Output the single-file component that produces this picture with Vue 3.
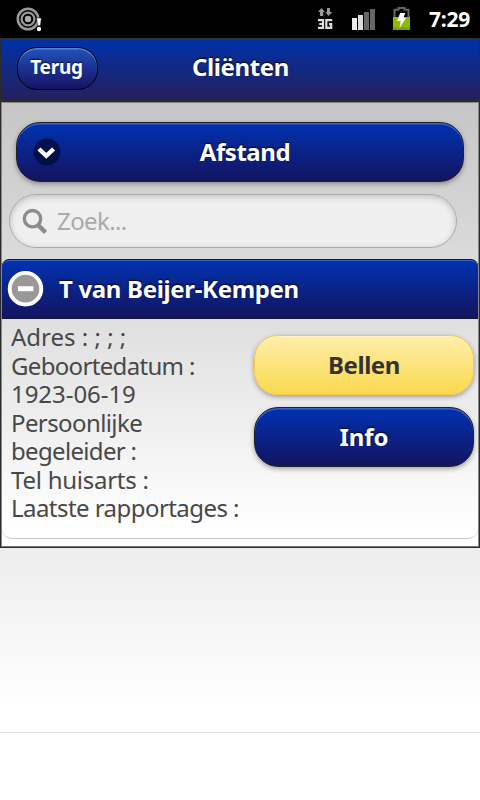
<script setup>
const details = [
  ['Adres : ; ; ;', 'adres'],
  ['Geboortedatum :', 'geboorte'],
  ['1923-06-19', 'datum'],
  ['Persoonlijke', 'persoonlijke'],
  ['begeleider :', 'begeleider'],
  ['Tel huisarts :', 'tel'],
  ['Laatste rapportages :', 'laatste'],
]
</script>

<template>
  <div class="screen">
    <div class="status">
      <svg class="debug" width="28" height="28" viewBox="0 0 28 28">
        <circle cx="12" cy="13" r="10.2" fill="none" stroke="#999" stroke-width="2.6" />
        <circle cx="12" cy="13" r="6.4" fill="none" stroke="#999" stroke-width="2.3" />
        <circle cx="12" cy="13" r="3.2" fill="#aaa" />
        <path d="M20.6 12h4.8l-1 7.7h-2.8z" fill="#fff" stroke="#000" stroke-width=".5" />
        <circle cx="23" cy="23" r="2.2" fill="#fff" />
      </svg>
      <svg class="net" width="18" height="24" viewBox="0 0 18 24">
        <path d="M4.5 1 8 5H6.2v4H3V5H1zM10 1h3v4h2.4L11.5 9 8.3 5H10z" fill="#999" />
        <path d="M1 13.2h5v7.6H1M2.2 17H6M15.2 13.2H9.3v7.6h4.9v-3.7h-2.2" fill="none" stroke="#ddd" stroke-width="2.2" />
      </svg>
      <svg class="signal" width="24" height="22" viewBox="0 0 24 22">
        <rect x="0" y="9" width="5" height="12" fill="#eee" />
        <rect x="6" y="6" width="5" height="15" fill="#ddd" />
        <rect x="12" y="3" width="5" height="18" fill="#666" />
        <rect x="18" y="0" width="5" height="21" fill="#666" />
      </svg>
      <svg class="battery" width="18" height="24" viewBox="0 0 18 24">
        <path d="M1.5 10V2.7h4V1h6v1.7h4V10" fill="none" stroke="#666" stroke-width="2" />
        <path d="M0 10h17v13H0z" fill="#8dbb00" />
        <path d="M0 20h17v3H0z" fill="#78a600" />
        <path d="M7.2 6h5l-1.7 5H13L6.5 21l1.2-7H4z" fill="#fff" />
      </svg>
      <span class="clock">7:29</span>
    </div>

    <div class="page">
      <header class="header">
        <button class="back"><span>Terug</span></button>
        <h1><span>Cliënten</span></h1>
      </header>
      <main class="content">
        <button class="btn blue sort">
          <svg width="28" height="28" viewBox="0 0 28 28">
            <circle cx="14" cy="14" r="13.4" fill="#000a38" fill-opacity=".75" />
            <path d="m6 11 7.3 6.8 7.3-6.8" fill="none" stroke="#fff" stroke-width="4.4" />
          </svg>
          <span>Afstand</span>
        </button>
        <div class="search">
          <svg width="28" height="28" viewBox="0 0 28 28">
            <circle cx="10.5" cy="11.7" r="8.2" fill="none" stroke="#8c8c8c" stroke-width="3.3" />
            <path d="m16 18 7.5 7.3" stroke="#8c8c8c" stroke-width="4.5" />
          </svg>
          <span>Zoek...</span>
        </div>
        <section class="client">
          <h2>
            <svg width="38" height="38" viewBox="0 0 38 38">
              <circle cx="18.5" cy="18.7" r="15.8" fill="#999" stroke="#fff" stroke-width="3.9" />
              <path d="M11 18.7h15.4" stroke="#fff" stroke-width="5" />
            </svg>
            <span>T van Beijer-Kempen</span>
          </h2>
          <div class="body">
            <div class="details">
              <div v-for="[text, name] in details" :key="name" :class="name">{{ text }}</div>
            </div>
            <div class="actions">
              <button class="btn yellow"><span>Bellen</span></button>
              <button class="btn blue info"><span>Info</span></button>
            </div>
          </div>
        </section>
      </main>
    </div>
    <div class="rest"></div>
  </div>
</template>

<style>
body { margin: 0; background: #fff; }
</style>

<style scoped>
* { box-sizing: border-box; }
.screen {
  width: 480px; height: 800px; overflow: hidden;
  display: flex; flex-direction: column;
  font-family: "Noto Sans", "Open Sans", sans-serif; font-size: 24px; color: #484848;
}
button { font-family: inherit; padding: 0; margin: 0; }
h1, h2 { margin: 0; font-size: 24px; }
svg { display: block; flex: none; }
.status {
  height: 38px; flex: none; background: #000; display: flex; align-items: flex-start;
  padding: 6px 0 0 16px;
}
.net { margin: 1px 0 0 273px; }
.signal { margin: 3px 0 0 17px; }
.battery { margin: 1px 0 0 17px; }
.clock {
  margin-left: 18px; color: #fff; font-size: 21px; font-weight: 700; line-height: 27px;
  letter-spacing: -.25px;
}
.page { height: 510px; flex: none; border: 1px solid #2b2b2b; border-top: 0; background: #fff; }
.header {
  height: 64px; border-top: 2px solid #333; border-bottom: 2px solid #2b2b2b;
  background: linear-gradient(#0031a7, #25205c);
  display: grid; grid-template-columns: 96px 286px 96px; align-items: start;
}
h1 { color: #fff; font-weight: 700; text-align: center; line-height: 32px; padding: 11px 0 0 1px; text-shadow: 0 -1.5px 1.5px #000; }
h1 span { letter-spacing: -.35px; }
.back {
  margin: 7px 0 0 16px; width: 81px; height: 43px; border: 1px solid #00000f; border-radius: 20px;
  background: linear-gradient(#2451bd, #151263); box-shadow: inset 0 1.5px 0 #5b82d3;
  color: #fff; font-size: 19px; line-height: 37px; padding: 0 2px 3px 0; font-weight: 700; text-shadow: 0 -1.5px 1.5px #001040;
}
.back span { letter-spacing: -.25px; }
.content {
  height: 445px; border: 1px solid #888; border-bottom-color: #777;
  background: linear-gradient(#c6c6c6, #dbdbdb 157px, #dfdfdf 217px, #fff 217px);
  padding: 19px 0 0;
}
.btn {
  display: block; height: 60px; border-radius: 24px; font-size: 24px; font-weight: 700; line-height: 56px;
  box-shadow: 0 2px 5px rgba(0, 0, 0, .35);
}
.btn span { letter-spacing: -.45px; }
.blue {
  color: #fff; border: 1px solid #202028; background: linear-gradient(#0032b1, #14145f);
  box-shadow: 0 2px 5px rgba(0, 0, 0, .35), inset 0 1.5px 0 #4165c4; text-shadow: 0 -1.5px 1.5px #000;
}
.info span { letter-spacing: -.1px; }
.sort {
  width: 448px; margin: 0 0 0 14px; display: grid; grid-template-columns: 60px 1fr 50px; align-items: center;
}
.sort svg { margin-left: 16px; }
.search {
  display: flex; align-items: center; gap: 7px; width: 448px; height: 54px; margin: 12px 0 0 7px;
  padding-left: 12px; border: 1px solid #aaa; border-radius: 27px; background: #efefef;
  box-shadow: inset 0 2px 6px rgba(0, 0, 0, .2); color: #aaa; line-height: 50px;
}
.search span { padding-bottom: 1px; letter-spacing: -.6px; }
.client { margin-top: 11px; height: 281px; }
h2 {
  height: 60px; display: flex; align-items: center; border-top: 1px solid #1d1d1d; border-bottom: 1px solid #15153c;
  border-radius: 7px 7px 0 0; background: linear-gradient(#0032b1, #14145f); box-shadow: inset 0 1px 0 #4165c4;
  padding: 0 0 0 5px; gap: 14px; color: #fff; line-height: 32px; text-shadow: 0 -1.5px 1.5px #000;
}
h2 span { letter-spacing: -.33px; white-space: nowrap; }
.body {
  height: 220px; display: grid; grid-template-columns: 252px 220px; align-items: start;
  background: linear-gradient(#dfdfdf, #fff 210px); border-bottom: 1px solid #c8c8c8; border-radius: 0 0 10px 10px;
}
.details { padding: 4px 0 0 9px; line-height: 28.5px; white-space: nowrap; }
.adres { letter-spacing: 0; }
.geboorte { letter-spacing: -.67px; }
.datum { letter-spacing: -.05px; }
.persoonlijke { letter-spacing: -.6px; }
.begeleider { letter-spacing: -.67px; }
.tel { letter-spacing: -.25px; }
.laatste { letter-spacing: -.55px; }
.actions { display: flex; flex-direction: column; gap: 12px; padding-top: 16px; }
.yellow { color: #333; border: 1px solid #f7c942; background: linear-gradient(#ffeeab, #f9d94d); box-shadow: 0 2px 5px rgba(0, 0, 0, .35), inset 0 1px 0 #fff3c8; }
.rest { height: 185px; flex: none; border-bottom: 1px solid #ddd; background: linear-gradient(#ededed, #fff 160px); }
</style>
